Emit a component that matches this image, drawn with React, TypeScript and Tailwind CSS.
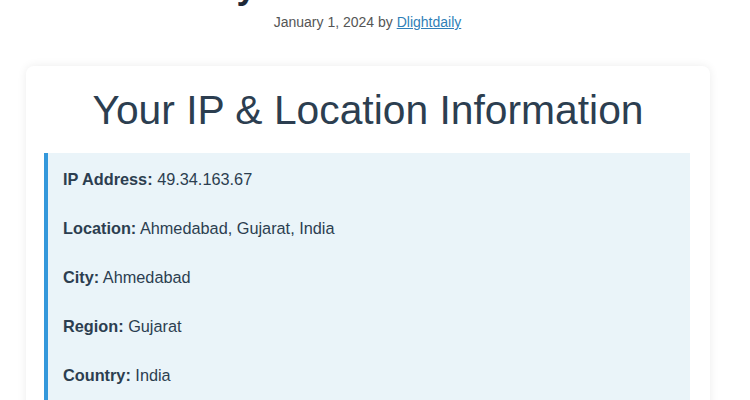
import React from 'react';

const rows: { label: string; value: string }[] = [
  { label: 'IP Address:', value: '49.34.163.67' },
  { label: 'Location:', value: 'Ahmedabad, Gujarat, India' },
  { label: 'City:', value: 'Ahmedabad' },
  { label: 'Region:', value: 'Gujarat' },
  { label: 'Country:', value: 'India' },
  { label: 'Postal Code:', value: '380001' },
];

export default function App() {
  return (
    <div className="h-[400px] overflow-hidden bg-white font-['Liberation_Sans',Arial,sans-serif]">
      <div className="w-[735px]">
        <h1 className="mt-[-36px] text-center text-[36px] font-bold leading-[43px] text-[#1f2937]">
          My IP Address Info
        </h1>
        <div className="mt-[5px] text-center text-[14px] leading-[20px] text-[#555]">
          January 1, 2024 by{' '}
          <a href="#" className="text-[#2f7fb8] underline">
            Dlightdaily
          </a>
        </div>
        <div className="ml-[26px] mt-[34px] w-[684px] rounded-lg bg-white px-[18px] pt-[16px] pb-5 shadow-[0_0_10px_rgba(0,0,0,0.08)]">
          <h2 className="text-center text-[40.8px] leading-[56px] text-[#2c3e50]">
            Your IP &amp; Location Information
          </h2>
          <div className="mt-[15px] mr-[2px] border-l-4 border-[#3498db] bg-[#eaf4f9] px-[15px] py-[2px]">
            {rows.map(r => (
              <p key={r.label} className="py-3 text-[16.3px] leading-[25px] text-[#2c3e50]">
                <strong>{r.label}</strong> {r.value}
              </p>
            ))}
          </div>
        </div>
      </div>
    </div>
  );
}
